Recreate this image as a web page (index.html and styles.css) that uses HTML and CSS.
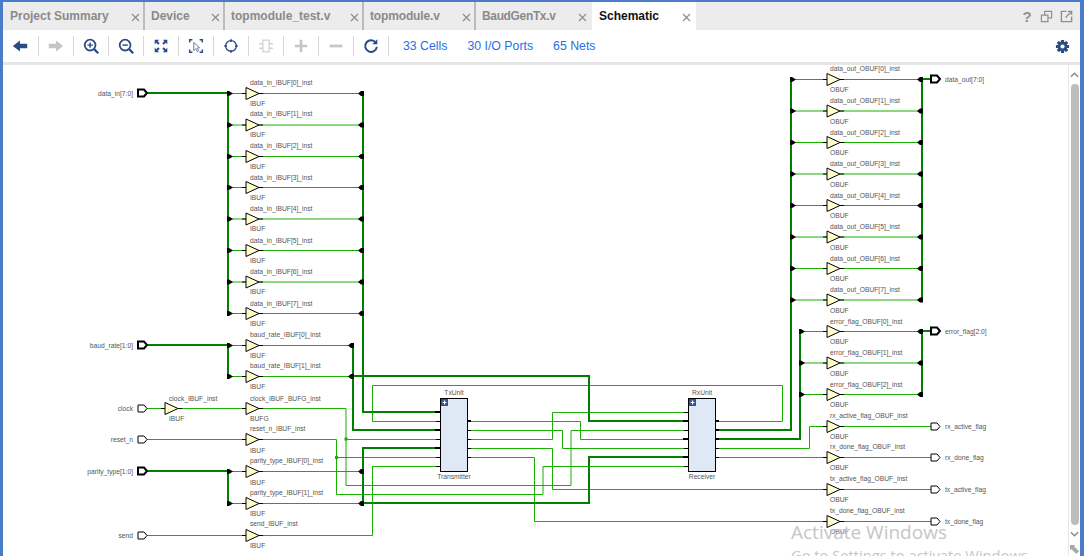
FILE: index.html
```html
<!DOCTYPE html>
<html lang="en">
<head>
<meta charset="utf-8">
<title>Schematic</title>
<link rel="stylesheet" href="styles.css">
</head>
<body>
<svg class="sprite" width="0" height="0"><defs><path id="x" d="M1 1l7 7M8 1L1 8" fill="none" stroke="#8d8d8d" stroke-width="1.200"/></defs></svg>
<div class="app">
  <div class="tabbar">
    <div class="tab w1"><span class="tab-name">Project Summary</span><svg class="tab-x" viewBox="0 0 9 9"><use href="#x"/></svg></div>
    <div class="tab w2"><span class="tab-name">Device</span><svg class="tab-x" viewBox="0 0 9 9"><use href="#x"/></svg></div>
    <div class="tab w3"><span class="tab-name">topmodule_test.v</span><svg class="tab-x" viewBox="0 0 9 9"><use href="#x"/></svg></div>
    <div class="tab w4"><span class="tab-name">topmodule.v</span><svg class="tab-x" viewBox="0 0 9 9"><use href="#x"/></svg></div>
    <div class="tab w5"><span class="tab-name">BaudGenTx.v</span><svg class="tab-x" viewBox="0 0 9 9"><use href="#x"/></svg></div>
    <div class="tab w6 active"><span class="tab-name">Schematic</span><svg class="tab-x" viewBox="0 0 9 9"><use href="#x"/></svg></div>
    <div class="tab-tools">
      <span class="help">?</span>
      <svg class="win-ico" viewBox="0 0 14 14"><path d="M1.5 5.5h7v7h-7zM5 5.5V1.500h7.500v7H8.500" fill="none" stroke="#8f8f8f" stroke-width="1.300"/></svg>
      <svg class="win-ico" viewBox="0 0 14 14"><path d="M7 1.500H1.500v11h11V7" fill="none" stroke="#8f8f8f" stroke-width="1.500"/><path d="M6 8l6-6M8.500 1.500h4v4" fill="none" stroke="#8f8f8f" stroke-width="1.500"/></svg>
    </div>
  </div>
  <div class="toolbar">
    <div class="tool"><svg viewBox="0 0 20 20" class="ico"><path d="M2 10l8-6v3.500h8v5h-8V16z" fill="#2b4b86"/></svg></div>
    <div class="tool"><svg viewBox="0 0 20 20" class="ico"><path d="M18 10l-8-6v3.500H2v5h8V16z" fill="#c6c6c6"/></svg></div>
    <div class="tool"><svg viewBox="0 0 20 20" class="ico"><circle cx="9" cy="9" r="6" fill="none" stroke="#2b4b86" stroke-width="2"/><path d="M13.500 13.500l4.500 4.500" stroke="#2b4b86" stroke-width="2.500"/><path d="M6 9h6M9 6v6" stroke="#2b4b86" stroke-width="1.600"/></svg></div>
    <div class="tool"><svg viewBox="0 0 20 20" class="ico"><circle cx="9" cy="9" r="6" fill="none" stroke="#2b4b86" stroke-width="2"/><path d="M13.500 13.500l4.500 4.500" stroke="#2b4b86" stroke-width="2.500"/><path d="M6 9h6" stroke="#2b4b86" stroke-width="1.600"/></svg></div>
    <div class="tool"><svg viewBox="0 0 20 20" class="ico"><path d="M3 3h5L6.300 4.700 8.500 7 7 8.500 4.700 6.300 3 8zM17 3v5l-1.700-1.700L13 8.500 11.500 7l2.200-2.300L12 3zM3 17v-5l1.700 1.700L7 11.500 8.500 13l-2.200 2.300L8 17zM17 17h-5l1.700-1.700L11.500 13l1.500-1.500 2.300 2.200L17 12z" fill="#2b4b86"/></svg></div>
    <div class="tool"><svg viewBox="0 0 20 20" class="ico"><path d="M6 3H3v3M14 3h3v3M3 14v3h3M17 14v3h-3" fill="none" stroke="#2b4b86" stroke-width="1.600"/><path d="M7.500 6l6.500 6-3 .3 2 3.200-1.400.8-1.900-3.200-2.200 2z" fill="#fff" stroke="#5f6f90" stroke-width="1"/></svg></div>
    <div class="tool"><svg viewBox="0 0 20 20" class="ico"><circle cx="10" cy="10" r="6" fill="none" stroke="#2b4b86" stroke-width="1.500"/><path d="M10 2.500v3M10 14.500v3M2.500 10h3M14.500 10h3" stroke="#2b4b86" stroke-width="1.800"/></svg></div>
    <div class="tool"><svg viewBox="0 0 20 20" class="ico"><rect x="6.500" y="3.500" width="7" height="13" fill="none" stroke="#cfcfcf" stroke-width="1.300"/><path d="M2.500 7.500h4M2.500 12.500h4M13.500 7.500h4M13.500 12.500h4" stroke="#cfcfcf" stroke-width="1.500"/></svg></div>
    <div class="tool"><svg viewBox="0 0 20 20" class="ico"><path d="M3 10h14M10 3v14" stroke="#c6c6c6" stroke-width="3"/></svg></div>
    <div class="tool"><svg viewBox="0 0 20 20" class="ico"><path d="M3 10h14" stroke="#c6c6c6" stroke-width="3"/></svg></div>
    <div class="tool"><svg viewBox="0 0 20 20" class="ico"><path d="M15.500 6.500A6.500 6.500 0 1 0 16.500 11" fill="none" stroke="#2b4b86" stroke-width="2.200"/><path d="M17 2.500V8h-5.500z" fill="#2b4b86"/></svg></div>
    <div class="links">
      <a class="link">33 Cells</a>
      <a class="link">30 I/O Ports</a>
      <a class="link">65 Nets</a>
    </div>
    <svg class="gear" viewBox="0 0 16 16"><g fill="#2b4b86"><rect x="6.300" y="1" width="3.400" height="14" rx=".6"/><rect x="6.300" y="1" width="3.400" height="14" rx=".6" transform="rotate(45 8 8)"/><rect x="6.300" y="1" width="3.400" height="14" rx=".6" transform="rotate(90 8 8)"/><rect x="6.300" y="1" width="3.400" height="14" rx=".6" transform="rotate(135 8 8)"/><circle cx="8" cy="8" r="5"/></g><circle cx="8" cy="8" r="2.200" fill="#fff"/></svg>
  </div>
  <div class="main">
    <div class="canvas">
      <svg class="schematic" viewBox="3 65 1065 491" width="1065" height="491">
        <defs>
          <g id="buf"><path d="M-4 0H0M13 0h4" stroke="#000" stroke-width="1"/><path d="M0-6L13 0 0 6z" fill="#ffffcc" stroke="#000" stroke-width="1"/></g>
          <path id="rip-r" d="M-1-2.500H1L5 0 1 2.500H-1z" fill="#000"/>
          <path id="rip-l" d="M2-2.500H-1L-4 0-1 2.500H2z" fill="#000"/>
          <path id="port" d="M0-3.500H6L9 0 6 3.500H0z" fill="#fff" stroke="#000" stroke-width="1"/>
          <path id="bport" d="M0-3.500H6L9 0 6 3.500H0z" fill="#fff" stroke="#000" stroke-width="2"/>
          <g id="plus"><rect x="-3.500" y="-3.500" width="7" height="7" fill="#34528f"/><path d="M-2 0H2M0-2V2" stroke="#fff" stroke-width="1.200"/></g>
        </defs>

        <g class="net">
          <path d="M228 93.500H246M259 93.500H363M228 125H246M259 125H363M228 156.500H246M259 156.500H363M228 187.500H246M259 187.500H363M228 219H246M259 219H363M228 250.500H246M259 250.500H363M228 282H246M259 282H363M228 313.500H246M259 313.500H363"/>
          <path d="M228 345.500H246M259 345.500H353M228 376.500H246M259 376.500H353"/>
          <path d="M147 408.500H165M178 408.500H246M259 408.500H346V485.500H571V430.500H688"/>
          <path d="M346 439.500H440"/>
          <path d="M147 439.500H246M259 439.500H336.500V494.500H543V466.500H688"/>
          <path d="M336.500 457.500H440"/>
          <path d="M228 471.500H246M259 471.500H363M228 503.500H246M259 503.500H363"/>
          <path d="M147 535.500H246M259 535.500H372.500V466.500H440"/>
          <path d="M716 421.500H782.500V385.500H372.500V421.500H440"/>
          <path d="M468 421.500H580.500V439.500H688"/>
          <path d="M468 430.500H562.500V448.500H688"/>
          <path d="M468 439.500H552.500V412.500H688"/>
          <path d="M468 448.500H552.500V489.500H827"/>
          <path d="M468 457.500H534.500V521.500H827"/>
          <path d="M716 448.500H809.500V426.500H827"/>
          <path d="M716 457.500H827"/>
          <path d="M791 79.500H827M840 79.500H922M791 111H827M840 111H922M791 142.500H827M840 142.500H922M791 174H827M840 174H922M791 205.500H827M840 205.500H922M791 237H827M840 237H922M791 268.500H827M840 268.500H922M791 300H827M840 300H922"/>
          <path d="M800 331.500H827M840 331.500H922M800 363H827M840 363H922M800 394.500H827M840 394.500H922"/>
          <path d="M840 426.500H931M840 457.500H931M840 489.500H931M840 521.500H931"/>
        </g>
        <g class="bus">
          <path d="M147 93H228V313.500"/>
          <path d="M363 93.500V412H440"/>
          <path d="M147 345H228V376.500"/>
          <path d="M353 345.500V430H440"/>
          <path d="M353 376H589V421H688"/>
          <path d="M147 471H228V503.500"/>
          <path d="M363 471.500V448H440"/>
          <path d="M363 471.500V503H589V457H688"/>
          <path d="M716 430H791V79.500"/>
          <path d="M716 439H800V331.500"/>
          <path d="M922 79.500V300"/>
          <path d="M922 79H931"/>
          <path d="M922 331.500V394.500"/>
          <path d="M922 331H931"/>
        </g>
        <rect class="dot" x="344.500" y="437.500" width="3" height="3"/>
        <rect class="dot" x="335" y="456" width="3" height="3"/>

        <g>
          <use href="#rip-r" x="228" y="93.500"/><use href="#rip-r" x="228" y="125"/><use href="#rip-r" x="228" y="156.500"/><use href="#rip-r" x="228" y="187.500"/><use href="#rip-r" x="228" y="219"/><use href="#rip-r" x="228" y="250.500"/><use href="#rip-r" x="228" y="282"/><use href="#rip-r" x="228" y="313.500"/>
          <use href="#rip-r" x="228" y="345.500"/><use href="#rip-r" x="228" y="376.500"/><use href="#rip-r" x="228" y="471.500"/><use href="#rip-r" x="228" y="503.500"/>
          <use href="#rip-l" x="362" y="93.500"/><use href="#rip-l" x="362" y="125"/><use href="#rip-l" x="362" y="156.500"/><use href="#rip-l" x="362" y="187.500"/><use href="#rip-l" x="362" y="219"/><use href="#rip-l" x="362" y="250.500"/><use href="#rip-l" x="362" y="282"/><use href="#rip-l" x="362" y="313.500"/>
          <use href="#rip-l" x="352" y="345.500"/><use href="#rip-l" x="352" y="376.500"/><use href="#rip-l" x="362" y="471.500"/><use href="#rip-l" x="362" y="503.500"/>
          <use href="#rip-r" x="791" y="79.500"/><use href="#rip-r" x="791" y="111"/><use href="#rip-r" x="791" y="142.500"/><use href="#rip-r" x="791" y="174"/><use href="#rip-r" x="791" y="205.500"/><use href="#rip-r" x="791" y="237"/><use href="#rip-r" x="791" y="268.500"/><use href="#rip-r" x="791" y="300"/>
          <use href="#rip-r" x="800" y="331.500"/><use href="#rip-r" x="800" y="363"/><use href="#rip-r" x="800" y="394.500"/>
          <use href="#rip-l" x="921" y="79.500"/><use href="#rip-l" x="921" y="111"/><use href="#rip-l" x="921" y="142.500"/><use href="#rip-l" x="921" y="174"/><use href="#rip-l" x="921" y="205.500"/><use href="#rip-l" x="921" y="237"/><use href="#rip-l" x="921" y="268.500"/><use href="#rip-l" x="921" y="300"/>
          <use href="#rip-l" x="921" y="331.500"/><use href="#rip-l" x="921" y="363"/><use href="#rip-l" x="921" y="394.500"/>
        </g>

        <g>
          <use href="#buf" x="246" y="93.500"/><use href="#buf" x="246" y="125"/><use href="#buf" x="246" y="156.500"/><use href="#buf" x="246" y="187.500"/><use href="#buf" x="246" y="219"/><use href="#buf" x="246" y="250.500"/><use href="#buf" x="246" y="282"/><use href="#buf" x="246" y="313.500"/>
          <use href="#buf" x="246" y="345.500"/><use href="#buf" x="246" y="376.500"/><use href="#buf" x="165" y="408.500"/><use href="#buf" x="246" y="408.500"/><use href="#buf" x="246" y="439.500"/><use href="#buf" x="246" y="471.500"/><use href="#buf" x="246" y="503.500"/><use href="#buf" x="246" y="535.500"/>
          <use href="#buf" x="827" y="79.500"/><use href="#buf" x="827" y="111"/><use href="#buf" x="827" y="142.500"/><use href="#buf" x="827" y="174"/><use href="#buf" x="827" y="205.500"/><use href="#buf" x="827" y="237"/><use href="#buf" x="827" y="268.500"/><use href="#buf" x="827" y="300"/>
          <use href="#buf" x="827" y="331.500"/><use href="#buf" x="827" y="363"/><use href="#buf" x="827" y="394.500"/><use href="#buf" x="827" y="426.500"/><use href="#buf" x="827" y="457.500"/><use href="#buf" x="827" y="489.500"/><use href="#buf" x="827" y="521.500"/>
          <use href="#bport" x="138" y="93"/><use href="#bport" x="138" y="345"/><use href="#port" x="138" y="408.500"/><use href="#port" x="138" y="439.500"/><use href="#bport" x="138" y="471"/><use href="#port" x="138" y="535.500"/>
          <use href="#bport" x="931" y="79"/><use href="#bport" x="931" y="331"/><use href="#port" x="931" y="426.500"/><use href="#port" x="931" y="457.500"/><use href="#port" x="931" y="489.500"/><use href="#port" x="931" y="521.500"/>
        </g>

        <g class="pins">
          <path d="M436 421.500H444M436 439.500H444M436 457.500H444M436 466.500H444M463 430.500H471M463 439.500H471M463 448.500H471M463 457.500H471"/>
          <path d="M684 412.500H692M684 430.500H692M684 448.500H692M684 466.500H692M711 448.500H719M711 457.500H719"/>
        </g>
        <g class="pins thick">
          <path d="M435 412H444M435 430H444M435 448H444M462 421H471"/>
          <path d="M683 421H692M683 439H692M683 457H692M710 421H719M710 430H719M710 439H719"/>
        </g>
        <rect class="block" x="440.500" y="398.500" width="27" height="73"/>
        <rect class="block" x="688.500" y="398.500" width="27" height="73"/>
        <use href="#plus" x="444.500" y="402.500"/>
        <use href="#plus" x="692.500" y="402.500"/>

        <g class="lbl">
          <text x="250" y="85">data_in_IBUF[0]_inst</text><text x="250" y="105.500">IBUF</text>
          <text x="250" y="116">data_in_IBUF[1]_inst</text><text x="250" y="137">IBUF</text>
          <text x="250" y="148">data_in_IBUF[2]_inst</text><text x="250" y="168.500">IBUF</text>
          <text x="250" y="179.500">data_in_IBUF[3]_inst</text><text x="250" y="199.500">IBUF</text>
          <text x="250" y="211">data_in_IBUF[4]_inst</text><text x="250" y="231">IBUF</text>
          <text x="250" y="242.500">data_in_IBUF[5]_inst</text><text x="250" y="262.500">IBUF</text>
          <text x="250" y="274">data_in_IBUF[6]_inst</text><text x="250" y="294">IBUF</text>
          <text x="250" y="305.500">data_in_IBUF[7]_inst</text><text x="250" y="325.500">IBUF</text>
          <text x="250" y="337">baud_rate_IBUF[0]_inst</text><text x="250" y="358">IBUF</text>
          <text x="250" y="368">baud_rate_IBUF[1]_inst</text><text x="250" y="389">IBUF</text>
          <text x="169" y="400.500">clock_IBUF_inst</text><text x="169" y="421">IBUF</text>
          <text x="250" y="400.500">clock_IBUF_BUFG_inst</text><text x="250" y="421">BUFG</text>
          <text x="250" y="431">reset_n_IBUF_inst</text><text x="250" y="452.500">IBUF</text>
          <text x="250" y="463">parity_type_IBUF[0]_inst</text><text x="250" y="484.500">IBUF</text>
          <text x="250" y="495">parity_type_IBUF[1]_inst</text><text x="250" y="516">IBUF</text>
          <text x="250" y="526">send_IBUF_inst</text><text x="250" y="547.500">IBUF</text>

          <text x="830" y="71">data_out_OBUF[0]_inst</text><text x="830" y="92">OBUF</text>
          <text x="830" y="103">data_out_OBUF[1]_inst</text><text x="830" y="124">OBUF</text>
          <text x="830" y="134.500">data_out_OBUF[2]_inst</text><text x="830" y="155">OBUF</text>
          <text x="830" y="166">data_out_OBUF[3]_inst</text><text x="830" y="187">OBUF</text>
          <text x="830" y="197.500">data_out_OBUF[4]_inst</text><text x="830" y="218">OBUF</text>
          <text x="830" y="229">data_out_OBUF[5]_inst</text><text x="830" y="249.500">OBUF</text>
          <text x="830" y="260.500">data_out_OBUF[6]_inst</text><text x="830" y="281">OBUF</text>
          <text x="830" y="292">data_out_OBUF[7]_inst</text><text x="830" y="312.500">OBUF</text>
          <text x="830" y="323.500">error_flag_OBUF[0]_inst</text><text x="830" y="344">OBUF</text>
          <text x="830" y="355">error_flag_OBUF[1]_inst</text><text x="830" y="375.500">OBUF</text>
          <text x="830" y="386.500">error_flag_OBUF[2]_inst</text><text x="830" y="407">OBUF</text>
          <text x="830" y="418">rx_active_flag_OBUF_inst</text><text x="830" y="438.500">OBUF</text>
          <text x="830" y="449">rx_done_flag_OBUF_inst</text><text x="830" y="470">OBUF</text>
          <text x="830" y="481">tx_active_flag_OBUF_inst</text><text x="830" y="502">OBUF</text>
          <text x="830" y="512.500">tx_done_flag_OBUF_inst</text><text x="830" y="533.500">OBUF</text>

          <text x="133" y="95.500" class="end">data_in[7:0]</text>
          <text x="133" y="347.500" class="end">baud_rate[1:0]</text>
          <text x="133" y="410.500" class="end">clock</text>
          <text x="133" y="441.500" class="end">reset_n</text>
          <text x="133" y="473.500" class="end">parity_type[1:0]</text>
          <text x="133" y="537.500" class="end">send</text>

          <text x="945" y="82">data_out[7:0]</text>
          <text x="945" y="334">error_flag[2:0]</text>
          <text x="945" y="429">rx_active_flag</text>
          <text x="945" y="460">rx_done_flag</text>
          <text x="945" y="492">tx_active_flag</text>
          <text x="945" y="524">tx_done_flag</text>

          <text x="454" y="395" class="mid">TxUnit</text>
          <text x="454" y="479" class="mid">Transmitter</text>
          <text x="702" y="395" class="mid">RxUnit</text>
          <text x="702" y="479" class="mid">Receiver</text>
        </g>
      </svg>
      <div class="watermark">
        <div class="wm-title">Activate Windows</div>
        <div class="wm-sub">Go to Settings to activate Windows</div>
      </div>
    </div>
    <div class="scrollbar">
      <div class="sb-end top"><svg viewBox="0 0 10 6" class="sb-arrow"><path d="M1 5l4-4 4 4" fill="none" stroke="#8a8a8a" stroke-width="1.600"/></svg></div>
      <div class="sb-thumb"></div>
      <div class="sb-end bottom"><svg viewBox="0 0 10 6" class="sb-arrow"><path d="M1 1l4 4 4-4" fill="none" stroke="#8a8a8a" stroke-width="1.600"/></svg></div>
      <div class="sb-corner"><svg viewBox="0 0 10 10" class="sb-resize"><path d="M0 0h6L4.500 1.500 10 7 7 10 1.500 4.500 0 6z" fill="#a9a9a9"/></svg></div>
    </div>
  </div>
</div>
</body>
</html>
```
FILE: styles.css
```css
* { box-sizing: border-box; }
html, body { margin: 0; padding: 0; height: 100%; overflow: hidden; background: #fff; }
.sprite { display: block; height: 0; }
.app {
  width: 1084px;
  height: 556px;
  display: flex;
  flex-direction: column;
  border-style: solid;
  border-color: #4a7cc9;
  border-width: 2px 4px 0 3px;
  font-family: "Liberation Sans", Arial, sans-serif;
}
.tabbar { height: 28px; display: flex; background: #ececec; flex: none; }
.tab {
  display: flex;
  align-items: center;
  justify-content: space-between;
  padding: 0 3.500px 0 6px;
  border-right: 2px solid #bcbcbc;
  flex: none;
}
.w1 { width: 142px; padding-left: 7px; }
.w2 { width: 80px; }
.w3 { width: 139px; }
.w4 { width: 112px; }
.w5 { width: 116px; border-right: none; padding-right: 5.500px; }
.w6 { width: 104px; border-right: none; padding-right: 5.500px; padding-left: 7px; }
.tab-name { font-size: 12px; font-weight: bold; color: #8a8a8a; }
.w5 .tab-name { letter-spacing: -.35px; }
.w4 .tab-name { letter-spacing: -.15px; }
.tab-x { width: 9px; height: 9px; margin-top: 2px; flex: none; }
.active { background: #fff; }
.active .tab-name { color: #111; }
.tab-tools { margin-left: auto; display: flex; align-items: center; gap: 7px; padding-right: 7px; }
.help { font-size: 15px; font-weight: bold; color: #8f8f8f; width: 12px; text-align: center; }
.win-ico { width: 13px; height: 13px; }
.toolbar { height: 32px; display: flex; align-items: center; flex: none; background: #fff; padding-right: 10px; }
.tool {
  width: 35px;
  height: 20px;
  flex: none;
  display: flex;
  align-items: center;
  justify-content: center;
  border-right: 1px solid #d8d8d8;
}
.tool:first-child { width: 35.500px; }
.ico { width: 18px; height: 18px; }
.links { display: flex; gap: 20px; margin-left: 14.500px; }
.link { font-size: 12.300px; color: #2670e6; }
.gear { width: 15px; height: 15px; margin-left: auto; }
.main { height: 494px; display: flex; flex: none; border-top: 3px solid #e6e6e6; }
.canvas { position: relative; width: 1065px; height: 491px; overflow: hidden; flex: none; }
.schematic { display: block; }
.net path { fill: none; stroke: #17b000; stroke-width: 1; }
.bus path { fill: none; stroke: #008000; stroke-width: 2; }
.dot { fill: #17b000; }
.pins path { fill: none; stroke: #000; stroke-width: 1; }
.pins.thick path { stroke-width: 2; }
.block { fill: #dfe9f6; stroke: #000; stroke-width: 1; }
.lbl text { font-family: "Liberation Sans", Arial, sans-serif; font-size: 6.700px; fill: #555; }
.lbl .end { text-anchor: end; }
.lbl .mid { text-anchor: middle; }
.watermark {
  position: absolute;
  left: 788px;
  top: 454px;
  color: #c6c6c6;
  font-family: "Open Sans", sans-serif;
  white-space: nowrap;
}
.wm-title { font-size: 19px; line-height: 26px; }
.wm-sub { font-size: 14.700px; line-height: 18px; margin-top: 1px; }
.scrollbar { width: 12px; flex: none; display: flex; flex-direction: column; align-items: center; border-left: 1px solid #e6e6e6; background: #fff; }
.sb-end { flex: none; display: flex; align-items: center; justify-content: center; width: 100%; }
.sb-end.top { height: 19px; }
.sb-end.bottom { height: 18px; }
.sb-arrow { width: 9px; height: 6px; }
.sb-thumb { flex: 1; width: 8px; background: #bdbdbd; border-radius: 4px; }
.sb-corner { height: 13px; flex: none; display: flex; align-items: center; justify-content: center; }
.sb-resize { width: 9px; height: 9px; }
```
